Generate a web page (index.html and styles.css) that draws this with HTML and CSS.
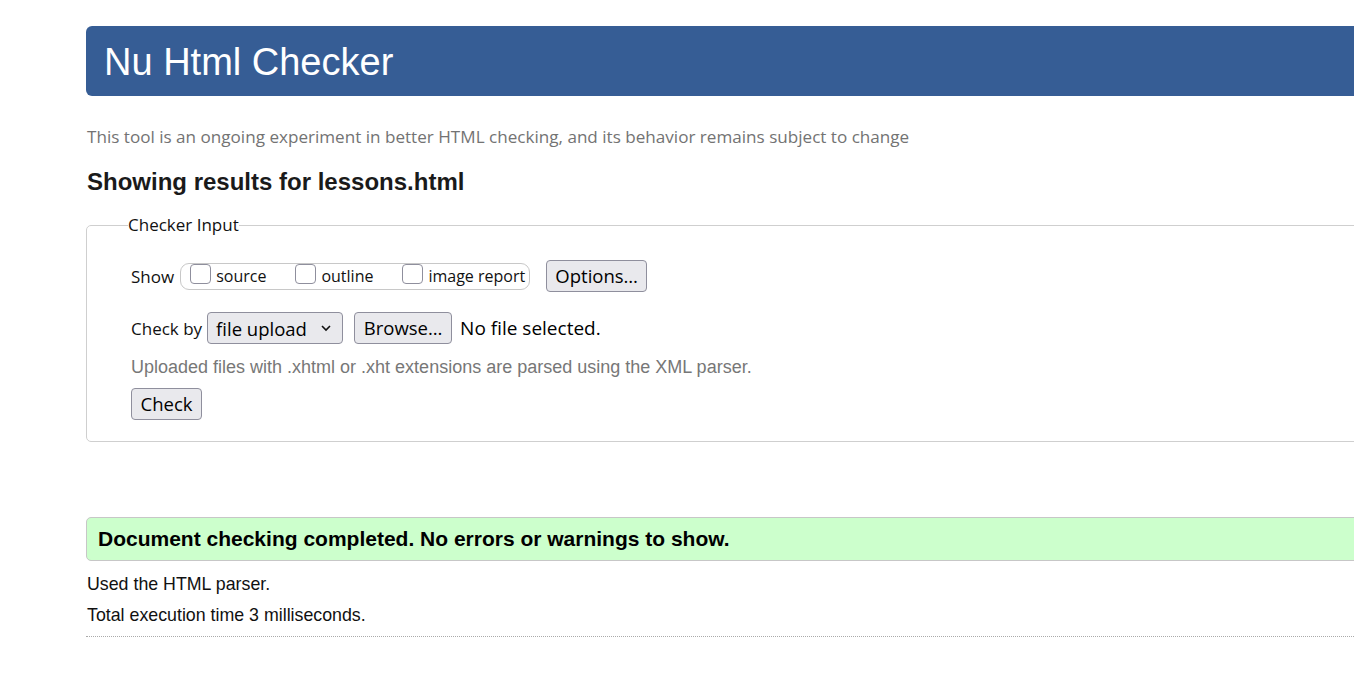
FILE: index.html
```html
<!DOCTYPE html>
<html lang="en">
<head>
<meta charset="utf-8">
<title>Showing results for lessons.html - Nu Html Checker</title>
<link rel="stylesheet" href="styles.css">
</head>
<body>
<div class="page">
  <h1 class="banner">Nu Html Checker</h1>
  <p class="tagline">This tool is an ongoing experiment in better HTML checking, and its behavior remains subject to change</p>
  <h2 class="results-title">Showing results for lessons.html</h2>
  <form class="checker-form">
    <fieldset class="checker">
      <legend class="checker-legend">Checker Input</legend>
      <div class="row show-row">
        <span class="label">Show</span>
        <span class="show-group">
          <label class="opt"><span class="box"></span>source</label>
          <label class="opt"><span class="box"></span>outline</label>
          <label class="opt"><span class="box"></span>image report</label>
        </span>
        <button type="button" class="btn">Options…</button>
      </div>
      <div class="row by-row">
        <span class="label">Check by</span>
        <span class="select">file upload
          <svg class="chev" width="12" height="8" viewBox="0 0 12 8"><path d="M2 2 L6 6 L10 2" fill="none" stroke="#111" stroke-width="1.6"/></svg>
        </span>
        <button type="button" class="btn browse">Browse…</button>
        <span class="nofile">No file selected.</span>
      </div>
      <p class="hint">Uploaded files with .xhtml or .xht extensions are parsed using the XML parser.</p>
      <button type="button" class="btn check">Check</button>
    </fieldset>
  </form>
  <div class="success">Document checking completed. No errors or warnings to show.</div>
  <p class="details">Used the HTML parser.</p>
  <p class="details">Total execution time 3 milliseconds.</p>
  <hr class="rule">
</div>
</body>
</html>
```
FILE: styles.css
```css
html, body {
  margin: 0;
  padding: 0;
  background: #fff;
  overflow: hidden;
}
body {
  font-family: "Liberation Sans", Arial, sans-serif;
  color: #111;
}
.page {
  margin-left: 86px;
  width: 1400px;
  padding-top: 26px;
}
.banner {
  margin: 0;
  height: 70px;
  box-sizing: border-box;
  background: #365d95;
  color: #fff;
  font-family: "Liberation Sans", Arial, sans-serif;
  font-weight: normal;
  font-size: 38px;
  line-height: 72px;
  padding-left: 18px;
  border-radius: 6px;
}
.tagline {
  margin: 30px 0 0 1px;
  font-family: "Open Sans", sans-serif;
  font-size: 17.1px;
  line-height: 22px;
  color: #737373;
}
.results-title {
  margin: 19px 0 0 1px;
  font-size: 24px;
  line-height: 30px;
  font-weight: bold;
  color: #1a1a1a;
}
.checker-form { margin: 0; }
.checker {
  margin: 17px 0 0 0;
  border: 1px solid #cfcfcf;
  border-radius: 5px;
  padding: 0 0 21px 44px;
}
.checker-legend {
  font-family: "Open Sans", sans-serif;
  font-size: 17px;
  line-height: 22px;
  padding: 0;
  margin-left: -3px;
  color: #111;
}
.row {
  display: flex;
  align-items: center;
  white-space: nowrap;
}
.show-row { margin-top: 24px; height: 32px; }
.label {
  font-family: "Open Sans", sans-serif;
  font-size: 17px;
  color: #111;
  flex-shrink: 0;
}
.show-group {
  display: flex;
  align-items: center;
  flex-shrink: 0;
  margin-left: 6px;
  height: 27px;
  box-sizing: border-box;
  border: 1px solid #c8c8c8;
  border-radius: 9px;
  padding: 0 0 0 9px;
  width: 350px;
}
.opt {
  display: flex;
  align-items: center;
  flex-shrink: 0;
  white-space: nowrap;
  font-family: "Open Sans", sans-serif;
  font-size: 16px;
  color: #111;
  margin-right: 29px;
}
.opt:last-child { margin-right: 0; }
.box {
  width: 21px;
  height: 20px;
  flex-shrink: 0;
  box-sizing: border-box;
  border: 1px solid #8f8f9d;
  border-radius: 4px;
  background: #fff;
  margin-right: 5px;
  margin-top: -4px;
}
.btn {
  font-family: "Open Sans", sans-serif;
  font-size: 18.5px;
  color: #000;
  background: #e9e9ed;
  border: 1px solid #8f8f9d;
  border-radius: 4px;
  padding: 0 8px;
  height: 32px;
  line-height: 28px;
  box-sizing: border-box;
  white-space: nowrap;
  flex-shrink: 0;
}
.show-row .btn { margin-left: 16px; width: 101px; }
.by-row { margin-top: 20px; height: 32px; }
.select {
  display: inline-flex;
  align-items: center;
  justify-content: space-between;
  flex-shrink: 0;
  margin-left: 5px;
  width: 136px;
  height: 32px;
  box-sizing: border-box;
  font-family: "Open Sans", sans-serif;
  font-size: 18.5px;
  color: #000;
  background: #e9e9ed;
  border: 1px solid #8f8f9d;
  border-radius: 4px;
  padding: 0 10px 0 8px;
}
.browse { margin-left: 11px; width: 98px; }
.nofile {
  margin-left: 8px;
  font-family: "Open Sans", sans-serif;
  font-size: 19px;
  color: #000;
}
.hint {
  margin: 10px 0 0 0;
  font-size: 18px;
  line-height: 26px;
  color: #777;
}
.check {
  margin-top: 8px;
  width: 71px;
}
.success {
  margin-top: 75px;
  height: 44px;
  box-sizing: border-box;
  background: #ccffcc;
  border: 1px solid #c7c7c7;
  border-radius: 5px;
  padding-left: 11px;
  font-weight: bold;
  font-size: 21px;
  line-height: 42px;
  color: #000;
}
.details {
  margin: 13px 0 0 1px;
  font-size: 17.8px;
  line-height: 20px;
  color: #111;
}
.details + .details { margin-top: 11px; }
.rule {
  margin: 11px 0 0 0;
  border: 0;
  border-top: 1px dotted #aaa;
}
```
